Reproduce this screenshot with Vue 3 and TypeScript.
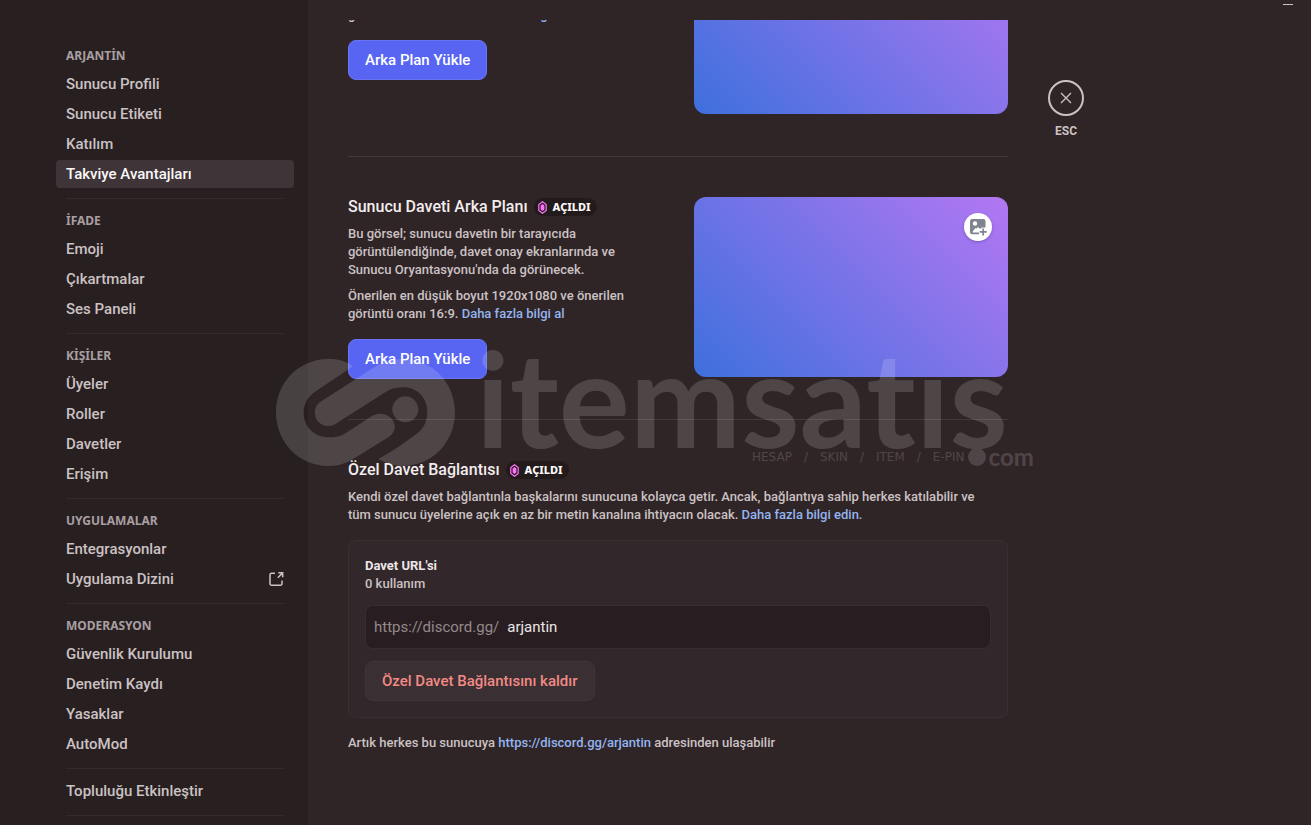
<script setup lang="ts">
import { onMounted, ref } from 'vue'

interface NavItem {
  label: string
  active?: boolean
  external?: boolean
}
interface NavGroup {
  title?: string
  items: NavItem[]
}

const groups: NavGroup[] = [
  {
    title: 'ARJANTİN',
    items: [
      { label: 'Sunucu Profili' },
      { label: 'Sunucu Etiketi' },
      { label: 'Katılım' },
      { label: 'Takviye Avantajları', active: true },
    ],
  },
  { title: 'İFADE', items: [{ label: 'Emoji' }, { label: 'Çıkartmalar' }, { label: 'Ses Paneli' }] },
  {
    title: 'KİŞİLER',
    items: [{ label: 'Üyeler' }, { label: 'Roller' }, { label: 'Davetler' }, { label: 'Erişim' }],
  },
  {
    title: 'UYGULAMALAR',
    items: [{ label: 'Entegrasyonlar' }, { label: 'Uygulama Dizini', external: true }],
  },
  {
    title: 'MODERASYON',
    items: [
      { label: 'Güvenlik Kurulumu' },
      { label: 'Denetim Kaydı' },
      { label: 'Yasaklar' },
      { label: 'AutoMod' },
    ],
  },
  { items: [{ label: 'Topluluğu Etkinleştir' }] },
]

const slogan = ['HESAP', '/', 'SKIN', '/', 'ITEM', '/', 'E-PIN']
const code = ref('arjantin')
const scroller = ref<HTMLElement | null>(null)

onMounted(() => {
  if (scroller.value) scroller.value.scrollTop = 146
})
</script>

<template>
  <div class="app">
    <aside class="sidebar">
      <nav class="nav">
        <div v-for="(group, i) in groups" :key="i" class="group">
          <h2 v-if="group.title" class="group-title">{{ group.title }}</h2>
          <a
            v-for="item in group.items"
            :key="item.label"
            href="#"
            class="nav-item"
            :class="{ active: item.active }"
          >
            <span>{{ item.label }}</span>
            <svg v-if="item.external" class="external" viewBox="0 0 16 16" aria-hidden="true">
              <path d="M7 2.300H3.600A1.600 1.600 0 0 0 2 3.900v8.800a1.600 1.600 0 0 0 1.600 1.600h8.800a1.600 1.600 0 0 0 1.600-1.600V9.500" />
              <path d="M10.300 1.800h4.400v4.400M14.400 2.100 9.800 6.700" />
            </svg>
          </a>
        </div>
        <div class="group"></div>
      </nav>
    </aside>

    <main ref="scroller" class="main">
      <div class="content">
        <section class="banner-row">
          <div class="copy">
            <h3 class="title">Sunucu Afişi Arka Planı</h3>
            <p>Bu görsel kanal listenin üzerinde görünecek.</p>
            <p>
              Önerilen en düşük boyut 960x540 ve önerilen<br />görüntü oranı 16:9.
              <a href="#">Daha fazla bilgi al</a>
            </p>
            <button type="button" class="primary">Arka Plan Yükle</button>
          </div>
          <div class="banner"></div>
        </section>

        <section class="banner-row">
          <div class="copy">
            <h3 class="title">
              Sunucu Daveti Arka Planı
              <span class="badge">
                <svg viewBox="0 0 9 13" aria-hidden="true">
                  <path class="gem-line" d="M4.5.7 8.2 3.5v6L4.5 12.3.8 9.5v-6z" />
                  <path class="gem-core" d="M4.5 3 6.4 4.5v4L4.5 10 2.6 8.5v-4z" />
                </svg>
                AÇILDI
              </span>
            </h3>
            <p>
              Bu görsel; sunucu davetin bir tarayıcıda<br />görüntülendiğinde, davet onay ekranlarında ve<br />
              Sunucu Oryantasyonu'nda da görünecek.
            </p>
            <p>
              Önerilen en düşük boyut 1920x1080 ve önerilen<br />görüntü oranı 16:9.
              <a href="#">Daha fazla bilgi al</a>
            </p>
            <button type="button" class="primary">Arka Plan Yükle</button>
          </div>
          <div class="banner">
            <button type="button" class="upload" aria-label="Arka Plan Yükle">
              <svg viewBox="0 0 18 18" aria-hidden="true">
                <path
                  fill-rule="evenodd"
                  d="M3 1h11.5a2 2 0 0 1 2 2v6.5h-4v1h-2l-1.5-1.5-1.5 1.5-1-.5-2.7 3.2V14.5h6.2v1.7H3a2 2 0 0 1-2-2V3a2 2 0 0 1 2-2zm3 2.3a2.2 2.2 0 1 0 0 4.4 2.2 2.2 0 0 0 0-4.4z"
                />
                <path d="M13.3 10.5h1.7v2.6h2.7v1.7h-2.7v2.7h-1.7v-2.7h-2.6v-1.7h2.6z" />
              </svg>
            </button>
          </div>
        </section>

        <section class="invite">
          <h3 class="title">
            Özel Davet Bağlantısı
            <span class="badge">
              <svg viewBox="0 0 9 13" aria-hidden="true">
                <path class="gem-line" d="M4.5.7 8.2 3.5v6L4.5 12.3.8 9.5v-6z" />
                <path class="gem-core" d="M4.5 3 6.4 4.5v4L4.5 10 2.6 8.5v-4z" />
              </svg>
              AÇILDI
            </span>
          </h3>
          <p>
            Kendi özel davet bağlantınla başkalarını sunucuna kolayca getir. Ancak, bağlantıya sahip herkes
            katılabilir ve<br />tüm sunucu üyelerine açık en az bir metin kanalına ihtiyacın olacak.
            <a href="#">Daha fazla bilgi edin.</a>
          </p>
          <div class="card">
            <label class="card-label" for="invite-code">Davet URL'si</label>
            <span class="uses">0 kullanım</span>
            <div class="field">
              <span class="prefix">https://discord.gg/</span>
              <input id="invite-code" v-model="code" type="text" />
            </div>
            <button type="button" class="danger">Özel Davet Bağlantısını kaldır</button>
          </div>
          <p class="note">
            Artık herkes bu sunucuya <a href="#">https://discord.gg/arjantin</a> adresinden ulaşabilir
          </p>
        </section>
      </div>
    </main>

    <div class="tools">
      <button type="button" class="close" aria-label="Kapat">
        <svg viewBox="0 0 12 12" aria-hidden="true"><path d="M1 1l10 10M11 1 1 11" /></svg>
      </button>
      <span class="esc">ESC</span>
    </div>

    <button type="button" class="minimize" aria-label="Simge durumuna küçült"></button>

    <div class="watermark" aria-hidden="true">
      <svg class="mark" viewBox="48 57 537 321">
        <path
          d="M279 79C257 62 232 57 205 57C116 57 48 128 48 217C48 306 116 378 205 378C236 378 258 371 283 355L385 292C400 283 406 267 404 256C400 229 368 212 340 226L254 281C240 289 226 292 206 292C163 292 131 260 131 219C131 191 143 171 164 156Z"
        />
        <path
          d="M355 357C378 371 402 378 428 378C517 378 585 306 585 217C585 128 517 57 428 57C392 57 369 66 344 81L184 184C168 194 163 209 165 224C169 252 201 267 226 252L377 156C393 146 409 142 430 142C472 142 502 174 502 216C502 244 490 267 468 283C435 308 396 335 355 357Z"
        />
        <circle cx="436" cy="208" r="39" />
      </svg>
      <div class="brand">
        <span class="word">itemsatış</span>
        <div class="sub">
          <div class="slogan">
            <span v-for="(word, i) in slogan" :key="i">{{ word }}</span>
          </div>
          <i class="dot"></i>
          <b class="com">com</b>
        </div>
      </div>
    </div>
  </div>
</template>

<style>
html,
body {
  background: #2f2426;
}
</style>

<style scoped>
* {
  box-sizing: border-box;
}
.app {
  position: relative;
  display: flex;
  height: 100vh;
  overflow: hidden;
  background: #2f2426;
  color: #cbc2c4;
  font-family: Roboto, 'Noto Sans', sans-serif;
  font-size: 13px;
  font-weight: 500;
  line-height: 18px;
}
h2,
h3,
p {
  margin: 0;
}
a {
  color: #93b4f0;
  text-decoration: none;
}
button,
input {
  font: inherit;
}
.sidebar {
  flex: 0 0 308px;
  padding: 42px 14px 0 56px;
  background: #281f20;
  overflow: hidden;
}
.nav,
.group {
  display: flex;
  flex-direction: column;
}
.group + .group {
  margin-top: 8px;
}
.group + .group::before {
  content: '';
  height: 1px;
  margin: 0 10px 8px;
  background: #35292b;
}
.group-title {
  padding: 0 10px;
  font-family: 'Noto Sans', sans-serif;
  font-size: 12px;
  font-weight: 700;
  line-height: 28px;
  color: #a99fa2;
}
.nav-item {
  display: flex;
  align-items: center;
  justify-content: space-between;
  height: 28px;
  margin-bottom: 2px;
  padding: 0 10px;
  border-radius: 4px;
  font-size: 15px;
  color: #cbc2c4;
}
.nav-item.active {
  background: #3f3538;
  color: #fbf8f9;
}
.external {
  width: 16px;
  height: 16px;
  fill: none;
  stroke: #cbc2c4;
  stroke-width: 1.5;
}
.main {
  flex: 0 1 740px;
  margin-top: 20px;
  padding: 0 40px;
  overflow-y: auto;
  scrollbar-width: none;
}
.content {
  padding: 60px 0 120px;
}
.banner-row {
  display: grid;
  grid-template-columns: 1fr 1fr;
  gap: 32px;
  min-height: 182px;
}
.banner-row + section {
  position: relative;
  margin-top: 81px;
}
.banner-row + section::before {
  content: '';
  position: absolute;
  top: -41px;
  left: 0;
  right: 0;
  height: 1px;
  background: #43383b;
}
.title {
  display: flex;
  align-items: center;
  gap: 6px;
  margin-bottom: 8px;
  font-size: 16px;
  font-weight: 500;
  line-height: 20px;
  color: #f3edef;
}
.badge {
  display: inline-flex;
  align-items: center;
  gap: 6px;
  height: 18px;
  padding: 0 6px 0 4px;
  border-radius: 9px;
  background: #231a1c;
  color: #fbf8f9;
  font-family: 'Noto Sans', sans-serif;
  font-size: 11px;
  font-weight: 800;
}
.badge svg {
  width: 9px;
  height: 13px;
}
.gem-line {
  fill: none;
  stroke: #ff73fa;
  stroke-width: 1.2;
}
.gem-core {
  fill: #ff73fa;
}
.copy p + p {
  margin-top: 8px;
}
.primary {
  display: block;
  height: 40px;
  margin-top: 16px;
  padding: 0 16px;
  border: 1px solid #6a75f5;
  border-radius: 8px;
  background: #5865f2;
  color: #fff;
  font-size: 15px;
}
.banner {
  display: flex;
  justify-content: flex-end;
  height: 180px;
  padding: 16px;
  border-radius: 12px;
  background: linear-gradient(45deg, #3e70dd, #b377f3);
}
.upload {
  display: grid;
  place-items: center;
  width: 28px;
  height: 28px;
  padding: 0;
  border: 0;
  border-radius: 50%;
  background: #fff;
  box-shadow: 0 1px 3px rgba(0, 0, 0, 0.25);
}
.upload svg {
  width: 18px;
  height: 18px;
  fill: #80848e;
}
.card {
  display: flex;
  flex-direction: column;
  align-items: flex-start;
  margin: 16px 0;
  padding: 16px;
  border: 1px solid #393032;
  border-radius: 8px;
  background: #32272a;
}
.card-label {
  font-weight: 700;
  color: #ece6e8;
}
.field {
  display: flex;
  align-items: center;
  align-self: stretch;
  gap: 8px;
  height: 44px;
  margin: 12px 0;
  padding: 0 8px;
  border: 1px solid #382d30;
  border-radius: 8px;
  background: #281e21;
  font-size: 15px;
  font-weight: 400;
}
.prefix {
  color: #94898c;
}
.field input {
  flex: 1;
  min-width: 0;
  padding: 0;
  border: 0;
  outline: 0;
  background: transparent;
  color: #ece6e8;
}
.danger {
  height: 40px;
  padding: 0 16px;
  border: 1px solid #40363a;
  border-radius: 8px;
  background: #3a2f32;
  color: #f28a86;
  font-size: 15px;
}
.tools {
  display: flex;
  flex-direction: column;
  align-items: center;
  flex: 0 0 36px;
  padding-top: 80px;
}
.close {
  display: grid;
  place-items: center;
  width: 36px;
  height: 36px;
  padding: 0;
  border: 2px solid #cbc2c4;
  border-radius: 50%;
  background: transparent;
}
.close svg {
  width: 12px;
  height: 12px;
  fill: none;
  stroke: #cbc2c4;
  stroke-width: 1.4;
}
.esc {
  margin-top: 6px;
  font-size: 12px;
  font-weight: 700;
}
.minimize {
  position: absolute;
  top: 4px;
  right: 18px;
  width: 10px;
  height: 1px;
  padding: 0;
  border: 0;
  background: #cbc2c4;
}
.watermark {
  position: absolute;
  top: 359px;
  left: 276px;
  display: flex;
  gap: 21px;
  color: #fff;
  opacity: 0.15;
  pointer-events: none;
}
.mark {
  width: 179px;
  height: 107px;
  fill: #fff;
}
.brand {
  display: flex;
  flex-direction: column;
}
.word {
  height: 91px;
  clip-path: inset(-20px 0 0 0);
  font-family: Lato, sans-serif;
  font-size: 133px;
  font-weight: 700;
  font-variant-ligatures: none;
  line-height: 75px;
}
.sub {
  display: flex;
  align-items: center;
  gap: 3px;
  height: 14px;
  margin-left: 276px;
}
.slogan {
  display: flex;
  gap: 12px;
  font-family: 'DejaVu Sans', sans-serif;
  font-size: 12px;
  font-weight: 400;
}
.dot {
  flex: none;
  width: 18px;
  height: 18px;
  border-radius: 50%;
  background: #fff;
}
.com {
  font-family: Lato, sans-serif;
  font-size: 24px;
}
</style>
